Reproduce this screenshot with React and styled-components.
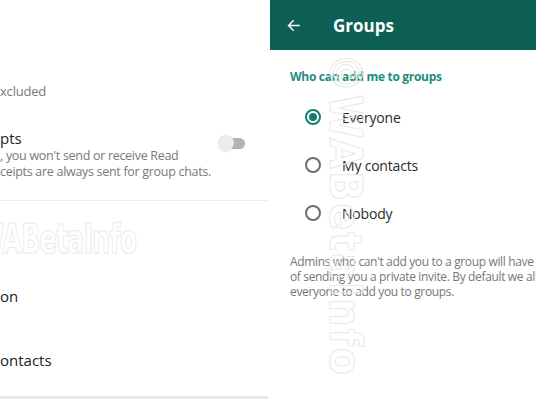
import React from "react";
import styled, { createGlobalStyle } from "styled-components";

const GlobalStyle = createGlobalStyle`
  html, body {
    margin: 0;
    padding: 0;
    background: #ffffff;
  }
  body {
    font-family: "Open Sans", "Noto Sans", sans-serif;
  }
`;

const Screen = styled.div`
  position: relative;
  width: 536px;
  height: 402px;
  display: flex;
  overflow: hidden;
  background: #ffffff;
`;

const LeftPanel = styled.div`
  position: relative;
  width: 268px;
  display: flex;
  flex-direction: column;
  padding-top: 82px;
  overflow: hidden;
`;

const SubText = styled.div`
  font-size: 13px;
  line-height: 18px;
  color: #7a7a7a;
  letter-spacing: -0.2px;
`;

const SettingRow = styled.div`
  display: flex;
  align-items: flex-start;
  justify-content: space-between;
  margin-top: ${(p) => p.$top || 0}px;
`;

const SettingText = styled.div`
  display: flex;
  flex-direction: column;
`;

const Title = styled.div`
  font-size: 15px;
  line-height: 20px;
  color: #222222;
  margin-top: ${(p) => p.$top || 0}px;
`;

const Desc = styled.div`
  font-size: 12.5px;
  line-height: 16px;
  color: #7a7a7a;
  letter-spacing: -0.3px;
  white-space: nowrap;
`;

const Toggle = styled.div`
  position: relative;
  width: 27px;
  height: 18px;
  margin: 6px 23px 0 0;
  display: flex;
  align-items: center;
  justify-content: flex-end;
`;

const Track = styled.div`
  width: 20px;
  height: 11px;
  border-radius: 6px;
  background: #b4b4b4;
`;

const Thumb = styled.div`
  position: absolute;
  left: 0;
  top: 1px;
  width: 16px;
  height: 16px;
  border-radius: 50%;
  background: #ececec;
  box-shadow: 0 1px 2px rgba(0, 0, 0, 0.1);
`;

const Divider = styled.div`
  height: 1px;
  background: #ececec;
  margin-top: 20px;
`;

const BottomBar = styled.div`
  height: 3px;
  background: #e8e8e8;
  margin-top: 26px;
`;

const Watermark = styled.div`
  position: absolute;
  font-family: "Liberation Sans Narrow", "DejaVu Sans Condensed", sans-serif;
  font-weight: 700;
  font-size: ${(p) => p.$size}px;
  color: transparent;
  -webkit-text-stroke: 1px #e9e9e9;
  white-space: nowrap;
  pointer-events: none;
`;

const LeftMark = styled(Watermark)`
  left: -48px;
  top: 216px;
  letter-spacing: -1px;
  transform: scaleX(0.7);
  transform-origin: left center;
`;

const RightMark = styled(Watermark)`
  left: 345px;
  top: 215px;
  letter-spacing: 2px;
  transform: translate(-50%, -50%) rotate(90deg);
`;

const RightPanel = styled.div`
  flex: 1;
  margin-left: 2px;
  display: flex;
  flex-direction: column;
  overflow: hidden;
`;

const Header = styled.div`
  height: 50px;
  background: #0d5e54;
  display: flex;
  align-items: center;
  padding-left: 16px;
  color: #ffffff;
`;

const HeaderTitle = styled.div`
  font-size: 17px;
  font-weight: 700;
  margin-left: 32px;
`;

const SectionLabel = styled.div`
  font-size: 12px;
  line-height: 16px;
  font-weight: 700;
  color: #1f8c7c;
  margin: 19px 0 8px 20px;
  letter-spacing: -0.3px;
`;

const OptionRow = styled.div`
  height: 48px;
  display: flex;
  align-items: center;
  padding-left: 35px;
`;

const Radio = styled.div`
  width: 16px;
  height: 16px;
  box-sizing: border-box;
  border-radius: 50%;
  border: 2px solid ${(p) => (p.$checked ? "#128070" : "#6f6f6f")};
  display: flex;
  align-items: center;
  justify-content: center;
  &::after {
    content: "";
    display: ${(p) => (p.$checked ? "block" : "none")};
    width: 8px;
    height: 8px;
    border-radius: 50%;
    background: #128070;
  }
`;

const OptionLabel = styled.div`
  font-size: 14px;
  color: #2a2a2a;
  margin-left: 21px;
  letter-spacing: -0.2px;
`;

const Note = styled.div`
  font-size: 12px;
  line-height: 15px;
  color: #777777;
  margin: 17px 0 0 20px;
  letter-spacing: -0.35px;
  white-space: nowrap;
`;

const BackArrow = () => (
  <svg width="15" height="15" viewBox="0 0 24 24" fill="none">
    <path
      d="M21 12H4M11.5 4.5L4 12l7.5 7.5"
      stroke="#ffffff"
      strokeWidth="2.2"
      strokeLinecap="square"
    />
  </svg>
);

const options = [
  { label: "Everyone", checked: true },
  { label: "My contacts" },
  { label: "Nobody" },
];

export default function App() {
  return (
    <>
      <GlobalStyle />
      <Screen>
        <LeftPanel>
          <SubText>xcluded</SubText>
          <SettingRow $top={28}>
            <SettingText>
              <Title>pts</Title>
              <Desc>, you won't send or receive Read</Desc>
              <Desc>ceipts are always sent for group chats.</Desc>
            </SettingText>
            <Toggle>
              <Track />
              <Thumb />
            </Toggle>
          </SettingRow>
          <Divider />
          <Title $top={85}>on</Title>
          <Title $top={44}>ontacts</Title>
          <BottomBar />
          <LeftMark $size={40}>©WABetaInfo</LeftMark>
        </LeftPanel>
        <RightPanel>
          <Header>
            <BackArrow />
            <HeaderTitle>Groups</HeaderTitle>
          </Header>
          <SectionLabel>Who can add me to groups</SectionLabel>
          {options.map((o) => (
            <OptionRow key={o.label}>
              <Radio $checked={o.checked} />
              <OptionLabel>{o.label}</OptionLabel>
            </OptionRow>
          ))}
          <Note>
            Admins who can't add you to a group will have the option
            <br />
            of sending you a private invite. By default we allow
            <br />
            everyone to add you to groups.
          </Note>
        </RightPanel>
        <RightMark $size={44}>©WABetaInfo</RightMark>
      </Screen>
    </>
  );
}
